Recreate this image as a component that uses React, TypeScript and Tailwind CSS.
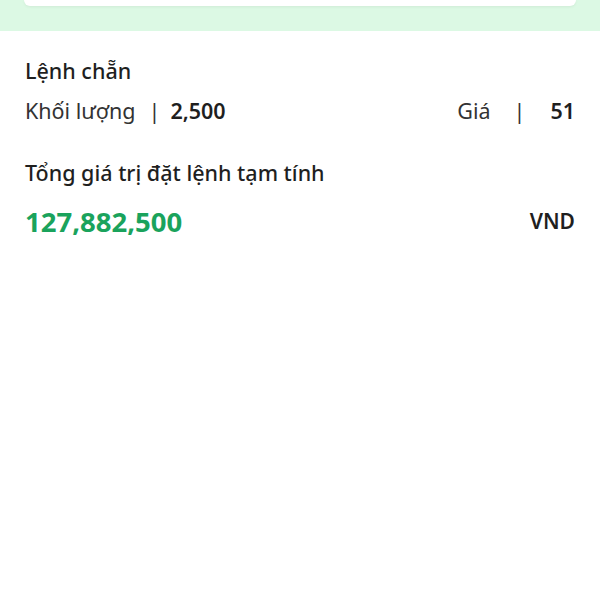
import React from 'react';

function App() {
  return (
    <div className="w-[600px] h-[600px] bg-white font-['Noto_Sans','Open_Sans',sans-serif] text-[#1f1f1f]">
      {/* top green band with the bottom of the card above */}
      <div className="h-[31px] bg-[#dcf9e4] px-[24px]">
        <div className="h-[6px] bg-white rounded-b-[16px] shadow-[0_1px_3px_rgba(0,0,0,0.06)]" />
      </div>

      <div className="px-[25px] pt-[24px]">
        <div className="text-[21.5px] font-medium leading-[32px]">Lệnh chẵn</div>

        <div className="flex items-center justify-between mt-[8px] text-[21.5px] leading-[32px]">
          <div className="flex items-center">
            <span className="text-[#333]">Khối lượng</span>
            <span className="ml-[13px] mr-[10px] text-[#333]">|</span>
            <span className="font-semibold">2,500</span>
          </div>
          <div className="flex items-center">
            <span className="text-[#333]">Giá</span>
            <span className="ml-[23px] mr-[25px] text-[#333]">|</span>
            <span className="font-semibold">51</span>
          </div>
        </div>

        <div className="text-[21.5px] font-medium leading-[32px] mt-[30px]">Tổng giá trị đặt lệnh tạm tính</div>

        <div className="flex items-center justify-between mt-[15px]">
          <span className="text-[27.5px] font-bold text-[#1aa35c] leading-[36px]">127,882,500</span>
          <span className="text-[21px] font-semibold">VND</span>
        </div>
      </div>
    </div>
  );
}

export default App;
